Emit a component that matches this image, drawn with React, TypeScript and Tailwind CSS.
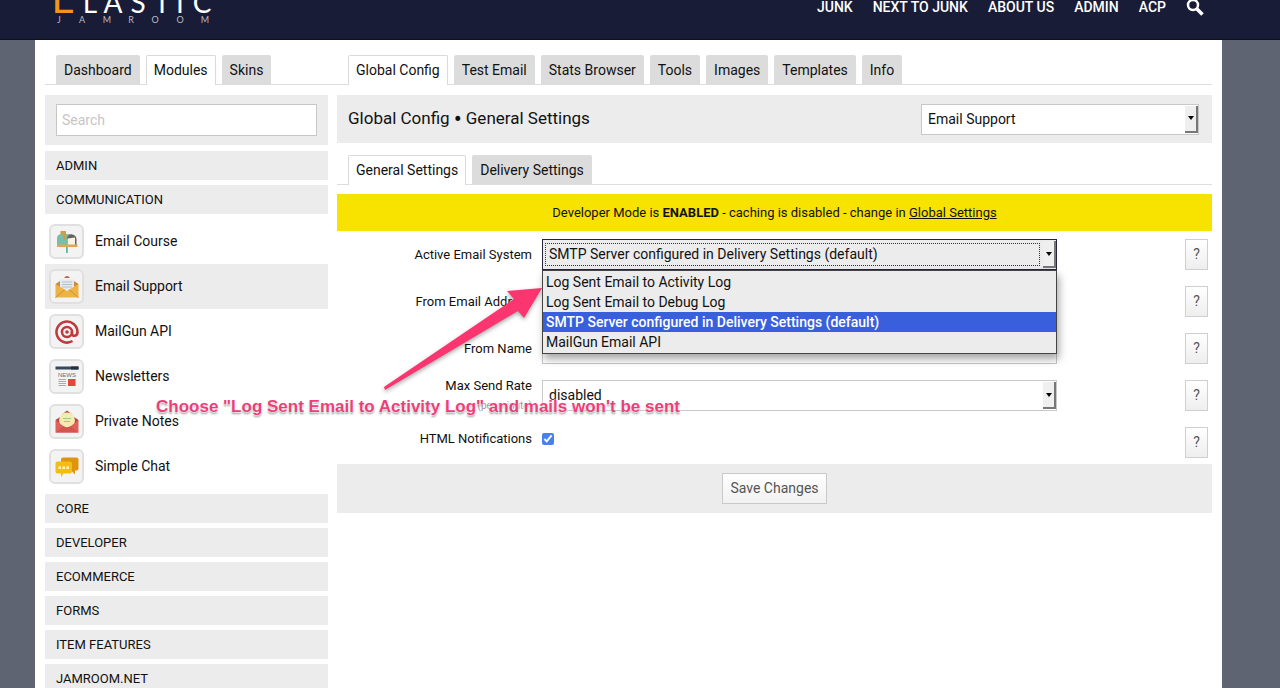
import type { ReactNode } from "react";

const NAV = ["JUNK", "NEXT TO JUNK", "ABOUT US", "ADMIN", "ACP"];
const SYSTEMS = [
  "Log Sent Email to Activity Log",
  "Log Sent Email to Debug Log",
  "SMTP Server configured in Delivery Settings (default)",
  "MailGun Email API",
];
const ACTIVE_SYSTEM = SYSTEMS[2];
const CATEGORIES_AFTER = ["CORE", "DEVELOPER", "ECOMMERCE", "FORMS", "ITEM FEATURES", "JAMROOM.NET"];

function MailboxIcon() {
  return (
    <svg viewBox="0 0 24 24" className="size-6">
      <path d="M11 16h1.800v7H11z" fill="#5db6a0" />
      <path d="M6 4h11v11H2V8.500A4.500 4.500 0 0 1 6 4z" fill="#79bfa8" />
      <path d="M12 15V9q0-4.500 4.500-4.500T21.500 9v6z" fill="#6b625c" />
      <path d="M12.500 8.500 20 7.500V15h-7.500z" fill="#f8f1e8" />
      <path d="M2 14.500h20.500V17H2z" fill="#e3a64e" />
      <path d="M5.500 1H11v9H8.500V4.500h-3z" fill="#d39a48" />
    </svg>
  );
}

function EnvelopeIcon() {
  return (
    <svg viewBox="0 0 24 24" className="size-6">
      <path d="M9 3q3-4 6 0z" fill="#b5654b" />
      <path d="M0.500 9 5 6v9zM23.500 9 19 6v9z" fill="#c98a3b" />
      <path d="M5 4.500h14V15H5z" fill="#e3e9ee" />
      <path d="M7 7h10M7 9.500h10M7 12h10" stroke="#b4c2cd" strokeWidth="1" />
      <path d="M0.500 9 12 16l11.500-7v13.500H0.500z" fill="#edb345" />
      <path d="m0.500 22.500 9-7.500M23.500 22.500l-9-7.500" stroke="#cf902f" strokeWidth="1" />
    </svg>
  );
}

function AtIcon() {
  return (
    <svg viewBox="0 0 24 24" className="size-6" fill="none" stroke="#bf3a3d">
      <circle cx="12" cy="12" r="5" strokeWidth="2.500" />
      <circle cx="12" cy="12" r="1.800" fill="#bf3a3d" stroke="none" />
      <path d="M17 12v1.500c0 3.500 5.500 3 5.500-1.500a10.500 10.500 0 1 0-5 9" strokeWidth="2.600" />
    </svg>
  );
}

function NewsIcon() {
  return (
    <svg viewBox="0 0 24 24" className="size-6">
      <path d="M0.500 1.500h23v3H0.500z" fill="#34495e" />
      <path d="M16 1.500h7.500v3H16z" fill="#26303a" />
      <text x="12" y="11.500" textAnchor="middle" fontSize="6" className="font-['Liberation_Sans',sans-serif]" fill="#6d6d6d">
        NEWS
      </text>
      <path d="M3.500 14.500h7.500M3.500 16.500h7.500M3.500 18.500h7.500M3.500 20.500h7.500" stroke="#a9a9a9" strokeWidth="1" />
      <path d="M13 14h7.500v7H13z" fill="#e8453c" />
    </svg>
  );
}

function NoteIcon() {
  return (
    <svg viewBox="0 0 24 24" className="size-6">
      <path d="M7 4.500 12 0.500l5 4zM0.500 10 5 7v8zM23.500 10 19 7v8z" fill="#b8453f" />
      <circle cx="12" cy="10.500" r="8" fill="#f3ecb0" />
      <path d="M8 8.500h8M9 11.500h6" stroke="#a9c58c" strokeWidth="1" />
      <path d="M0.500 10 7.500 15.500Q12 20 16.500 15.500L23.500 10v12.500H0.500z" fill="#e0605a" />
      <path d="m0.500 22.500 8-6.500q3.500 2.500 7 0l8 6.500z" fill="#d4544e" />
    </svg>
  );
}

function ChatIcon() {
  return (
    <svg viewBox="0 0 24 24" className="size-6">
      <path d="M8 2.500h13.500q2 0 2 2v9q0 2-2 2H20v4l-4-4H8q-2 0-2-2v-9q0-2 2-2z" fill="#df9410" />
      <path d="M2.500 6.500H15q2 0 2 2v8q0 2-2 2H8.500L6 22.500v-4H2.500q-2 0-2-2v-8q0-2 2-2z" fill="#f4bd15" />
      <path d="M3.500 11.500H6V14H3.500zM7.500 11.500H10V14H7.500zM11.500 11.500H14V14h-2.500z" fill="#fff6da" />
    </svg>
  );
}

const MODULES: { name: string; icon: ReactNode }[] = [
  { name: "Email Course", icon: <MailboxIcon /> },
  { name: "Email Support", icon: <EnvelopeIcon /> },
  { name: "MailGun API", icon: <AtIcon /> },
  { name: "Newsletters", icon: <NewsIcon /> },
  { name: "Private Notes", icon: <NoteIcon /> },
  { name: "Simple Chat", icon: <ChatIcon /> },
];

function Tabs({ items, active }: { items: string[]; active: string }) {
  return (
    <nav className="flex h-[30px] gap-[6px] border-b border-[#dedede] pl-[11px]">
      {items.map((t) => (
        <a
          key={t}
          href="#"
          className={
            t === active
              ? "-mb-px h-[30px] rounded-t-xs border border-b-0 border-[#dadada] bg-white px-[7px] leading-[29px]"
              : "h-[29px] rounded-t-xs bg-[#dcdcdc] px-2 leading-[31px]"
          }
        >
          {t}
        </a>
      ))}
    </nav>
  );
}

function Category({ name }: { name: string }) {
  return (
    <a href="#" className="block h-[29px] bg-[#ececec] pl-[11px] text-[13px] leading-[30px]">
      {name}
    </a>
  );
}

type SelectBoxProps = {
  id: string;
  label?: string;
  options: string[];
  value: string;
  open?: boolean;
};

function SelectBox({ id, label, options, value, open }: SelectBoxProps) {
  return (
    <div className="relative w-full">
      <select
        id={id}
        aria-label={label}
        defaultValue={value}
        className={
          open
            ? "block h-[31px] w-full appearance-none border border-[#26243a] bg-[#ececec] pl-[6px]"
            : "block h-[31px] w-full appearance-none border border-[#c8c8c8] bg-white pl-[6px]"
        }
      >
        {options.map((o) => (
          <option key={o}>{o}</option>
        ))}
      </select>
      {open && (
        <span className="pointer-events-none absolute top-1 right-[17px] bottom-1 left-[3px] border border-dotted border-[#333]" />
      )}
      <span className="pointer-events-none absolute top-0.5 right-px bottom-0.5 flex w-[13px] items-center justify-center border-r-2 border-b-2 border-[#777] bg-[#efefef]">
        <svg viewBox="0 0 6 4" className="h-1 w-1.5">
          <path d="M0 0h6L3 4z" fill="#000" />
        </svg>
      </span>
    </div>
  );
}

type RowProps = {
  id: string;
  label: string;
  sub?: string;
  top?: boolean;
  children: ReactNode;
};

function Row({ id, label, sub, top, children }: RowProps) {
  return (
    <div className={top ? "flex h-[31px] items-start" : "flex h-[31px] items-center"}>
      <label
        htmlFor={id}
        className={top ? "w-[195px] shrink-0 text-right text-[13px] leading-6" : "w-[195px] shrink-0 text-right text-[13px] leading-5"}
      >
        {label}
        {sub && <span className="block text-[10px] text-[#999]">{sub}</span>}
      </label>
      <div className="relative ml-[10px] w-[515px]">{children}</div>
      <button
        type="button"
        aria-label={`Help: ${label}`}
        className="mr-1 ml-auto h-[31px] w-[23px] border border-[#cfcfcf] bg-linear-to-b from-white to-[#eeeeee] text-[#555]"
      >
        ?
      </button>
    </div>
  );
}

const LOGO_TOP: [string, number][] = [["L", 37], ["A", 60], ["S", 85], ["T", 109], ["I", 127], ["C", 149]];
const LOGO_SUB: [string, number][] = [["J", 6], ["A", 29], ["M", 54], ["R", 78], ["O", 102], ["O", 127], ["M", 152]];

function Logo() {
  return (
    <svg viewBox="0 0 160 26" className="h-[26px] w-[160px] font-[Lato,sans-serif]" textAnchor="middle">
      <text x="10" y="13" fontSize="40" fill="#f0951e">E</text>
      {LOGO_TOP.map(([c, x]) => (
        <text key={x} x={x} y="13" fontSize="28" fill="#fff">{c}</text>
      ))}
      {LOGO_SUB.map(([c, x]) => (
        <text key={x} x={x} y="23" fontSize="9" fill="#b9bac6">{c}</text>
      ))}
    </svg>
  );
}

function Annotation() {
  return (
    <>
      <svg
        viewBox="0 0 170 120"
        className="pointer-events-none absolute top-[276px] left-[381px] h-[120px] w-[170px] drop-shadow-[0_2px_2px_rgba(0,0,0,0.35)]"
      >
        <path d="M161 12 126 15 133 23 3 111 4 114 137 35 143 42z" fill="#fb356f" />
      </svg>
      <p className="pointer-events-none absolute top-[397px] left-[156px] font-['Liberation_Sans',Arial,sans-serif] text-[17px] leading-5 font-bold whitespace-nowrap text-[#ec3e78] [text-shadow:0_0_1px_#fff,0_0_2px_#fff,0_0_3px_#fff,0_2px_2px_rgba(0,0,0,0.45)]">
        Choose "Log Sent Email to Activity Log" and mails won't be sent
      </p>
    </>
  );
}

export default function App() {
  return (
    <div className="relative h-screen overflow-hidden bg-[#5f6473] font-[Roboto,sans-serif] text-[14px] text-[#111]">
      <header className="flex h-10 items-start justify-between border-b border-[#0d0f24] bg-[#191c36] pr-[76px] pl-[53px]">
        <Logo />
        <nav className="-mt-0.5 flex items-center gap-5 leading-[14px] font-medium text-white">
          {NAV.map((n) => (
            <a key={n} href="#">{n}</a>
          ))}
          <button type="button" aria-label="Search">
            <svg viewBox="0 0 18 18" className="size-[18px]" fill="none" stroke="#fff">
              <circle cx="7" cy="7" r="5" strokeWidth="2.500" />
              <path d="m11 11 5.500 5.500" strokeWidth="3.500" />
            </svg>
          </button>
        </nav>
      </header>

      <div className="mr-[58px] ml-[35px] flex gap-[9px] bg-white px-[10px] pt-[15px]">
        <aside className="w-[283px] shrink-0">
          <div className="-mr-[9px]">
            <Tabs items={["Dashboard", "Modules", "Skins"]} active="Modules" />
          </div>
          <div className="mt-[10px] bg-[#ececec] px-[11px] py-[9px]">
            <input
              type="text"
              aria-label="Search modules"
              placeholder="Search"
              className="block h-8 w-full border border-[#c6c6c6] bg-white px-[5px] placeholder:text-[#c6c6c6]"
            />
          </div>
          <div className="mt-[6px] flex flex-col gap-[5px]">
            <Category name="ADMIN" />
            <Category name="COMMUNICATION" />
            <ul>
              {MODULES.map((m) => (
                <li key={m.name} className={m.name === "Email Support" ? "bg-[#ececec]" : ""}>
                  <a href="#" className="flex h-[45px] items-center gap-[11px] pl-1">
                    <span className="flex size-[35px] items-center justify-center rounded-md border-2 border-[#e0e0e0] bg-[#f3f3f3]">
                      {m.icon}
                    </span>
                    {m.name}
                  </a>
                </li>
              ))}
            </ul>
            {CATEGORIES_AFTER.map((c) => (
              <Category key={c} name={c} />
            ))}
          </div>
        </aside>

        <main className="min-w-0 flex-1">
          <Tabs
            items={["Global Config", "Test Email", "Stats Browser", "Tools", "Images", "Templates", "Info"]}
            active="Global Config"
          />
          <div className="mt-[10px] flex h-12 items-center justify-between bg-[#ececec] pr-[13px] pl-[11px]">
            <h1 className="flex items-center gap-1 text-[17px]">
              Global Config <span className="text-[24px] leading-5">•</span> General Settings
            </h1>
            <div className="w-[278px]">
              <SelectBox id="module" label="Module" options={["Email Support"]} value="Email Support" />
            </div>
          </div>
          <div className="mt-3">
            <Tabs items={["General Settings", "Delivery Settings"]} active="General Settings" />
          </div>
          <p className="mt-[9px] h-[37px] bg-[#f8e300] text-center text-[13px] leading-[38px]">
            Developer Mode is <b>ENABLED</b> - caching is disabled - change in{" "}
            <a href="#" className="underline">Global Settings</a>
          </p>

          <form className="mt-2">
            <div className="flex flex-col gap-4 pb-[6px]">
              <Row id="system" label="Active Email System">
                <SelectBox id="system" options={SYSTEMS} value={ACTIVE_SYSTEM} open />
                <ul
                  role="listbox"
                  aria-label="Active Email System"
                  className="absolute top-[31px] left-0 z-10 w-full border border-[#444] bg-[#ececec] py-px shadow-[2px_5px_8px_rgba(0,0,0,0.35)]"
                >
                  {SYSTEMS.map((s) => (
                    <li
                      key={s}
                      role="option"
                      aria-selected={s === ACTIVE_SYSTEM}
                      className={
                        s === ACTIVE_SYSTEM
                          ? "h-5 bg-[#3a5fdc] pl-[3px] leading-5 font-medium text-white"
                          : "h-5 pl-[3px] leading-5"
                      }
                    >
                      {s}
                    </li>
                  ))}
                </ul>
              </Row>
              <Row id="from-email" label="From Email Address">
                <input id="from-email" type="text" className="block h-[31px] w-full border border-[#c8c8c8] bg-white px-[5px]" />
              </Row>
              <Row id="from-name" label="From Name">
                <input id="from-name" type="text" className="block h-[31px] w-full border border-[#c8c8c8] bg-white px-[5px]" />
              </Row>
              <Row id="rate" label="Max Send Rate" sub="(per minute)">
                <SelectBox id="rate" options={["disabled"]} value="disabled" />
              </Row>
              <Row id="html" label="HTML Notifications" top>
                <div className="flex h-6 items-center">
                  <input id="html" type="checkbox" defaultChecked className="size-3 accent-[#4a80ee]" />
                </div>
              </Row>
            </div>
            <div className="flex h-[49px] items-center justify-center bg-[#ececec]">
              <button
                type="button"
                className="h-[31px] border border-[#c9c9c9] bg-linear-to-b from-white to-[#f1f1f1] px-[7px] text-[#555]"
              >
                Save Changes
              </button>
            </div>
          </form>
        </main>
      </div>
      <Annotation />
    </div>
  );
}
